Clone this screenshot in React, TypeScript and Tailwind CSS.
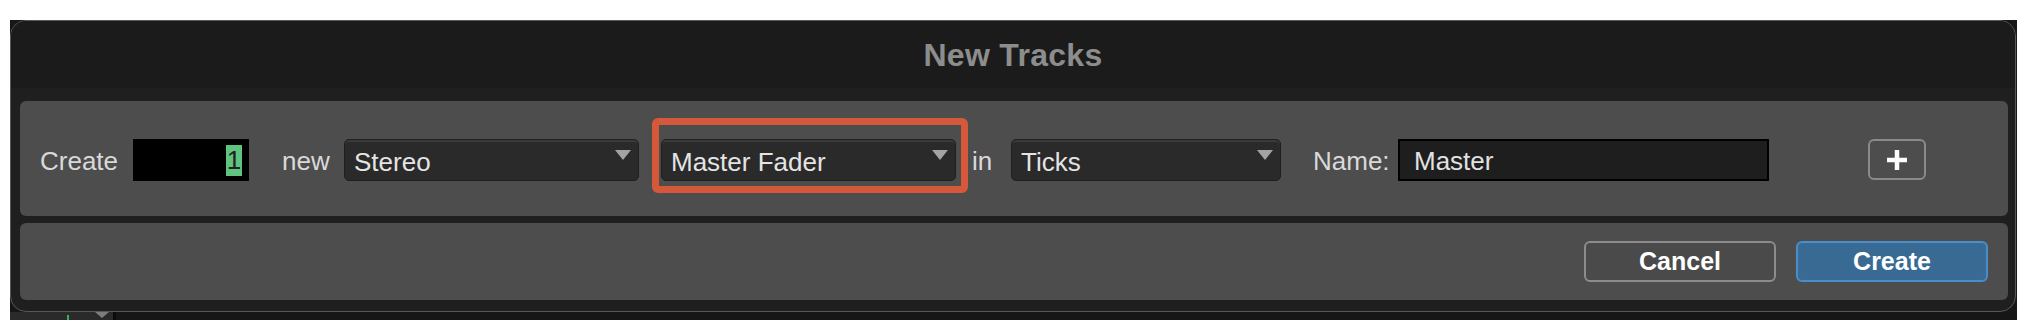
import React from "react";

const font = { fontFamily: '"Liberation Sans", Arial, Helvetica, sans-serif' };

function Triangle() {
  return (
    <svg width="16" height="10" viewBox="0 0 16 10" className="absolute right-[7px] top-[10px]">
      <polygon points="0,0 16,0 8,10" fill="#a3a3a3" />
    </svg>
  );
}

function Dropdown({ label, width }: { label: string; width: string }) {
  return (
    <div
      className={`relative h-[42px] ${width} rounded-[5px] border border-[#1f1f1f] bg-[#2a2a2a] shadow-[inset_0_2px_0_#3a3a3a]`}
    >
      <span className="block pl-[9px] text-[26px] leading-[44px] text-[#e4e4e4]">{label}</span>
      <Triangle />
    </div>
  );
}

export default function App() {
  return (
    <div className="h-[328px] w-full bg-white pl-[10px] pt-[20px]" style={font}>
      <div className="flex h-[300px] w-[2007px] flex-col bg-[#171717]">
        <div className="flex h-[292px] w-[2006px] flex-col overflow-hidden rounded-[16px] border border-[#585858] bg-[#1f1f1f]">
          {/* Title */}
          <div className="flex h-[67px] items-center justify-center bg-[#1b1b1b]">
            <span className="text-[32px] font-bold tracking-[0.3px] text-[#8d8d8d]">New Tracks</span>
          </div>
          {/* Body */}
          <div className="flex flex-col gap-[7px] pb-[11px] pl-[9px] pr-[7px] pt-[13px]">
            {/* Panel 1 */}
            <div className="flex h-[115px] items-start rounded-[6px] bg-[#4d4d4d] pl-[20px] pt-[38px]">
              <span className="w-[93px] text-[26px] leading-[44px] text-[#d9d9d9]">Create</span>
              <div className="flex h-[42px] w-[116px] items-center justify-end bg-black pr-[7px]">
                <span className="flex h-[31px] w-[16px] items-center justify-center bg-[#5fc47f] text-[26px] leading-[31px] text-[#222]">
                  1
                </span>
              </div>
              <span className="ml-[33px] w-[62px] text-[26px] leading-[44px] text-[#d9d9d9]">new</span>
              <Dropdown label="Stereo" width="w-[295px]" />
              <div className="relative ml-[22px]">
                <Dropdown label="Master Fader" width="w-[295px]" />
                <div className="pointer-events-none absolute left-[-9px] top-[-21px] h-[75px] w-[316px] rounded-[6px] border-[7px] border-[#d6583a]" />
              </div>
              <span className="ml-[16px] w-[39px] text-[26px] leading-[44px] text-[#d9d9d9]">in</span>
              <Dropdown label="Ticks" width="w-[270px]" />
              <span className="ml-[32px] w-[85px] text-[26px] leading-[44px] text-[#d9d9d9]">Name:</span>
              <div className="h-[42px] w-[371px] border-2 border-black bg-[#1e1e1e] pl-[14px]">
                <span className="block text-[26px] leading-[40px] text-[#e2e2e2]">Master</span>
              </div>
              <button className="ml-[99px] flex h-[41px] w-[58px] items-center justify-center rounded-[6px] border-2 border-[#8a8a8a] bg-[#4d4d4d]">
                <svg width="20" height="20" viewBox="0 0 20 20">
                  <rect x="7.75" y="0" width="4.5" height="20" fill="#fff" />
                  <rect x="0" y="7.75" width="20" height="4.5" fill="#fff" />
                </svg>
              </button>
            </div>
            {/* Panel 2 */}
            <div className="flex h-[77px] items-center justify-end gap-[20px] rounded-[6px] bg-[#4d4d4d] pr-[20px]">
              <button className="flex h-[41px] w-[192px] items-center justify-center rounded-[6px] border-2 border-[#8c8c8c] bg-[#4a4a4a] text-[25px] font-bold text-white">
                Cancel
              </button>
              <button className="flex h-[41px] w-[192px] items-center justify-center rounded-[6px] border-2 border-[#4a8dcb] bg-[#386a94] text-[25px] font-bold text-white">
                Create
              </button>
            </div>
          </div>
        </div>
        {/* strip of the app behind */}
        <div className="flex h-[8px] w-full">
          <div className="flex h-full w-[103px] items-start bg-[#2a2a2a]">
            <div className="ml-[57px] mt-[3px] h-[5px] w-[2px] bg-[#3fae5a]" />
            <svg width="14" height="6" viewBox="0 0 14 6" className="ml-[26px]">
              <polygon points="0,0 14,0 7,6" fill="#7c7c7c" />
            </svg>
          </div>
          <div className="h-full w-[3px] bg-[#0c0c0c]" />
          <div className="h-full flex-1 bg-[#161616]" />
        </div>
      </div>
    </div>
  );
}
